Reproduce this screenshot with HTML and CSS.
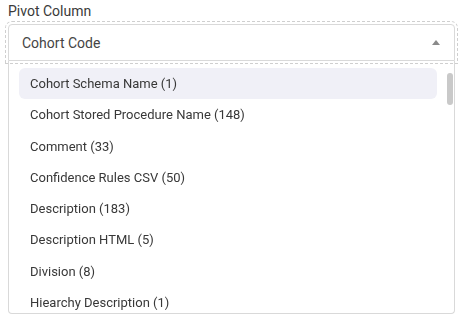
FILE: index.html
```html
<!doctype html>
<html>
  <head>
    <title>Pivot Column</title>
    <meta charset="UTF-8" />
    <link rel="stylesheet" href="styles.css">
  </head>
  <body>
    <div class="field">
      <label class="field-label" for="pivot">Pivot Column</label>
      <div class="select open">
        <div class="select-control">
          <input id="pivot" class="select-input" type="text" value="Cohort Code" autofocus />
          <svg class="select-arrow" width="8" height="5" viewBox="0 0 8 5">
            <path d="M0 5 L4 0 L8 5 Z" />
          </svg>
        </div>
        <div class="select-menu">
          <ul class="options">
            <li class="option active">Cohort Schema Name (1)</li>
            <li class="option">Cohort Stored Procedure Name (148)</li>
            <li class="option">Comment (33)</li>
            <li class="option">Confidence Rules CSV (50)</li>
            <li class="option">Description (183)</li>
            <li class="option">Description HTML (5)</li>
            <li class="option">Division (8)</li>
            <li class="option">Hiearchy Description (1)</li>
          </ul>
          <div class="scroll-thumb"></div>
        </div>
      </div>
    </div>
  </body>
</html>
```
FILE: styles.css
```css
html,
body {
  margin: 0;
  padding: 0;
  background: #ffffff;
}
body {
  font: 400 14px/1.4 Roboto, 'Noto Sans', sans-serif;
  color: #333333;
  -webkit-font-smoothing: antialiased;
}
.field {
  padding: 2px 3px 0 8px;
}
.field-label {
  display: block;
  height: 20px;
  line-height: 18px;
  font-size: 14px;
  color: #3a3a3a;
}
.select {
  margin-top: 2px;
}
.select-control {
  display: flex;
  align-items: center;
  height: 35px;
  border: 1px solid #d9d9d9;
  border-radius: 4px 4px 0 0;
  padding: 0 13px 0 13px;
  outline: 1px dashed #cfcfcf;
  outline-offset: 2px;
}
.select-input {
  flex: 1;
  border: 0;
  outline: none;
  padding: 0;
  font: 400 14px Roboto, 'Noto Sans', sans-serif;
  color: #444444;
  background: transparent;
  caret-color: #222222;
}
.select-arrow {
  fill: #8a8a8a;
  margin-right: 1px;
}
.select-menu {
  position: relative;
  height: 252px;
  overflow: hidden;
  border: 1px solid #d9d9d9;
  border-top: 0;
  border-radius: 0 0 4px 4px;
}
.options {
  list-style: none;
  margin: 0;
  padding: 7px 17px 0 10px;
}
.option {
  height: 31.3px;
  line-height: 31px;
  padding-left: 11px;
  font-size: 13px;
  color: #383838;
  border-radius: 6px;
}
.option.active {
  background: #f0f0f7;
}
.scroll-thumb {
  position: absolute;
  top: 12px;
  right: 1px;
  width: 6px;
  height: 32px;
  border-radius: 3px;
  background: #c9c9c9;
}
```
